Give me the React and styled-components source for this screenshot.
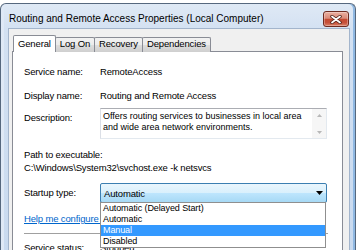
import React from 'react';
import styled, { createGlobalStyle } from 'styled-components';

const Global = createGlobalStyle`
  html, body { margin: 0; padding: 0; background: #ffffff; overflow: hidden; }
  body { font-family: "Liberation Sans", Arial, sans-serif; color: #000; }
  #root { width: 357px; height: 250px; overflow: hidden; }
`;

const Window = styled.div`
  box-sizing: border-box;
  margin-top: 3px;
  width: 356px;
  height: 247px;
  border: 1px solid #56687e;
  border-bottom: none;
  border-radius: 6px 6px 0 0;
  background: linear-gradient(#dfe9f5, #d3e1f2 26px, #c9daef);
  box-shadow: inset 3px 0 0 #dfe9f6, inset -2px 0 0 #8fb8e2;
  padding: 0 5px 0 7px;
  display: flex;
  flex-direction: column;
  overflow: hidden;
`;

const TitleBar = styled.div`
  height: 24px;
  flex-shrink: 0;
  display: flex;
  align-items: flex-end;
  justify-content: space-between;
  padding: 0 1px 1px 1px;
  box-sizing: border-box;
`;

const Title = styled.div`
  align-self: flex-start;
  margin-top: 9px;
  font-size: 10px;
  line-height: 12px;
  white-space: nowrap;
`;

const CloseBtn = styled.div`
  width: 26px;
  height: 16px;
  box-sizing: border-box;
  border: 1px solid #6e2b21;
  border-radius: 3px;
  background: linear-gradient(#eab0a1, #da8a79 45%, #c44a31 52%, #c6503a 75%, #d98066);
  box-shadow: inset 0 0 0 1px rgba(255, 255, 255, 0.3);
  display: flex;
  align-items: center;
  justify-content: center;
`;

const Client = styled.div`
  flex: 1;
  min-height: 0;
  background: #f0f0f0;
  border: 1px solid #a3b5cc;
  border-bottom: none;
  padding: 6px 6px 0 3px;
  display: flex;
  flex-direction: column;
`;

const TabRow = styled.div`
  display: flex;
  align-items: flex-end;
  height: 17px;
  padding-left: 1px;
  margin-bottom: -1px;
  position: relative;
  z-index: 1;
  flex-shrink: 0;
`;

const Tab = styled.div`
  box-sizing: border-box;
  height: ${(p) => (p.$active ? 17 : 15)}px;
  padding: ${(p) => (p.$active ? 2 : 0)}px 4px 0 4px;
  margin-left: ${(p) => (p.$first ? 0 : -1)}px;
  border: 1px solid #898c95;
  border-bottom: none;
  border-radius: 2px 2px 0 0;
  background: ${(p) =>
    p.$active ? '#ffffff' : 'linear-gradient(#f2f2f2, #ebebeb 50%, #dddddd 50%, #cfcfcf)'};
  position: relative;
  z-index: ${(p) => (p.$active ? 2 : 1)};
  font-size: 9.5px;
  letter-spacing: -0.15px;
  line-height: 12px;
  white-space: nowrap;
`;

const Panel = styled.div`
  flex: 1;
  background: #ffffff;
  border: 1px solid #898c95;
  border-bottom: none;
  padding: 14px 0 0 11px;
  display: flex;
  flex-direction: column;
`;

const Row = styled.div`
  display: flex;
  align-items: ${(p) => (p.$top ? 'flex-start' : 'center')};
  margin-top: ${(p) => p.$mt || 0}px;
  flex-shrink: 0;
`;

const Label = styled.div`
  width: 76px;
  flex-shrink: 0;
  margin-top: ${(p) => p.$mt || 0}px;
  font-size: 9.5px;
  letter-spacing: -0.15px;
  line-height: 12px;
  white-space: nowrap;
`;

const Text = styled.div`
  font-size: 9.5px;
  letter-spacing: -0.15px;
  line-height: 12px;
  white-space: nowrap;
`;

const Link = styled(Text)`
  color: #0066cc;
  text-decoration: underline;
`;

const TextBox = styled.div`
  box-sizing: border-box;
  width: 227px;
  height: 31px;
  border: 1px solid #e3e9ef;
  border-top-color: #abadb3;
  border-left-color: #dbdfe6;
  background: #ffffff;
  display: flex;
`;

const BoxText = styled.div`
  flex: 1;
  padding: 2px 0 0 2px;
  font-size: 9px;
  line-height: 11px;
`;

const ScrollBar = styled.div`
  width: 14px;
  background: #f6f6f6;
  display: flex;
  flex-direction: column;
  justify-content: space-between;
  align-items: center;
  padding: 5px 0 4px;
`;

const Separator = styled.div`
  width: 304px;
  height: 1px;
  background: #a0a0a0;
  border-bottom: 1px solid #ffffff;
`;

const ComboWrap = styled.div`
  position: relative;
  width: 227px;
`;

const Combo = styled.div`
  box-sizing: border-box;
  height: 20px;
  border: 1px solid #3c7fb1;
  border-radius: 2px;
  background: linear-gradient(#eaf6fd, #d9f0fc 50%, #bee6fd 50%, #a7d9f5);
  display: flex;
  align-items: center;
  justify-content: space-between;
  padding: 0 3px 0 3px;
  font-size: 9.5px;
  letter-spacing: -0.15px;
`;

const List = styled.div`
  position: absolute;
  top: calc(100% - 1px);
  left: 0;
  right: 1px;
  box-sizing: border-box;
  border: 1px solid #8f8f8f;
  background: #ffffff;
  z-index: 5;
`;

const Item = styled.div`
  height: 11px;
  line-height: 11px;
  padding-left: 2px;
  font-size: 9px;
  letter-spacing: -0.1px;
  white-space: nowrap;
  background: ${(p) => (p.$selected ? '#3399ff' : 'transparent')};
  color: ${(p) => (p.$selected ? '#ffffff' : '#000000')};
`;

const CloseIcon = () => (
  <svg width="12" height="9" viewBox="0 0 12 9">
    <path d="M2 1.5 L10 7.5 M10 1.5 L2 7.5" stroke="#4a1e16" strokeWidth="3.4" strokeLinecap="round" />
    <path d="M2 1.5 L10 7.5 M10 1.5 L2 7.5" stroke="#ffffff" strokeWidth="1.8" strokeLinecap="round" />
  </svg>
);

const Arrow = ({ up, color = '#000', w = 7, h = 4 }) => (
  <svg width={w} height={h} viewBox={`0 0 ${w} ${h}`}>
    <polygon
      points={up ? `0,${h} ${w},${h} ${w / 2},0` : `0,0 ${w},0 ${w / 2},${h}`}
      fill={color}
    />
  </svg>
);

const tabs = ['General', 'Log On', 'Recovery', 'Dependencies'];
const options = ['Automatic (Delayed Start)', 'Automatic', 'Manual', 'Disabled'];

export default function App() {
  return (
    <>
      <Global />
      <Window>
        <TitleBar>
          <Title>Routing and Remote Access Properties (Local Computer)</Title>
          <CloseBtn>
            <CloseIcon />
          </CloseBtn>
        </TitleBar>
        <Client>
          <TabRow>
            {tabs.map((t, i) => (
              <Tab key={t} $active={i === 0} $first={i === 0}>
                {t}
              </Tab>
            ))}
          </TabRow>
          <Panel>
            <Row>
              <Label>Service name:</Label>
              <Text>RemoteAccess</Text>
            </Row>
            <Row $mt={12}>
              <Label>Display name:</Label>
              <Text>Routing and Remote Access</Text>
            </Row>
            <Row $mt={6} $top>
              <Label $mt={4}>Description:</Label>
              <TextBox>
                <BoxText>
                  Offers routing services to businesses in local area
                  <br />
                  and wide area network environments.
                </BoxText>
                <ScrollBar>
                  <Arrow up color="#b8b8b8" w={5} h={3} />
                  <Arrow color="#b8b8b8" w={5} h={3} />
                </ScrollBar>
              </TextBox>
            </Row>
            <Row $mt={10}>
              <Text>Path to executable:</Text>
            </Row>
            <Row $mt={1}>
              <Text>C:\Windows\System32\svchost.exe -k netsvcs</Text>
            </Row>
            <Row $mt={9}>
              <Label>Startup type:</Label>
              <ComboWrap>
                <Combo>
                  <span>Automatic</span>
                  <Arrow />
                </Combo>
                <List>
                  {options.map((o) => (
                    <Item key={o} $selected={o === 'Manual'}>
                      {o}
                    </Item>
                  ))}
                </List>
              </ComboWrap>
            </Row>
            <Row $mt={10}>
              <Link>Help me configure service startup options.</Link>
            </Row>
            <Row $mt={8}>
              <Separator />
            </Row>
            <Row $mt={7}>
              <Label>Service status:</Label>
              <Text>Stopped</Text>
            </Row>
          </Panel>
        </Client>
      </Window>
    </>
  );
}
